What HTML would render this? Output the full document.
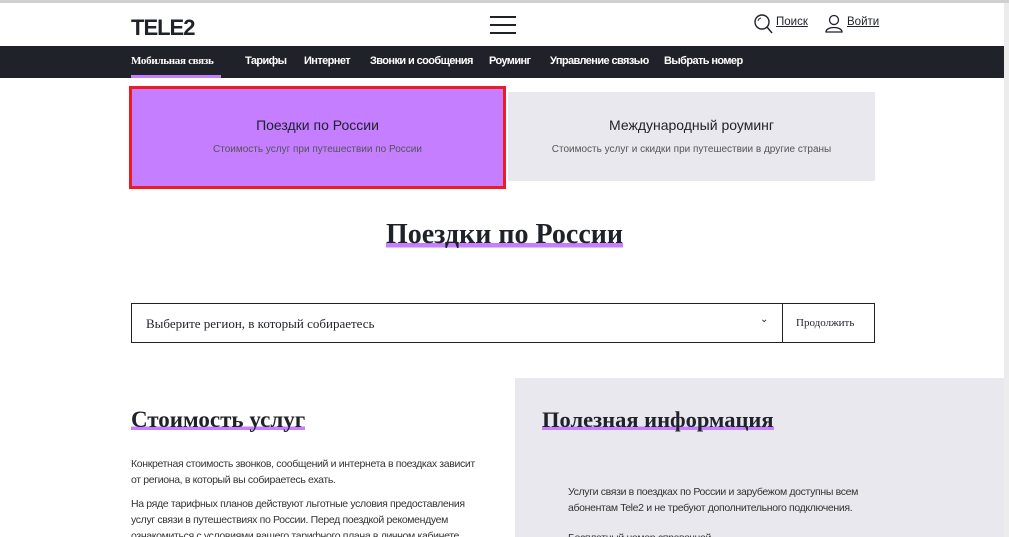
<!DOCTYPE html>
<html><head><meta charset="utf-8"><style>
*{margin:0;padding:0;box-sizing:border-box}
html,body{width:1009px;height:537px;overflow:hidden}
body{background:#fff;font-family:"Liberation Sans",sans-serif;position:relative;color:#1f2229}
.a{position:absolute}
.top{left:0;top:0;width:1009px;height:3px;background:#d0d0d0}
.right{left:1004px;top:3px;width:5px;height:534px;background:#ececec}
.logo{left:131px;top:15px;font:900 22px "Liberation Sans",sans-serif;letter-spacing:-1px;color:#1f2229}
.burger{left:490px;top:16px;width:26px}
.burger i{display:block;height:2px;background:#1f2229;margin-bottom:6px}
.nav{left:0;top:46px;width:1004px;height:32px;background:#1f2229}
.nav span{position:absolute;top:9px;font-size:11px;color:#fff;font-weight:bold;letter-spacing:-0.6px;white-space:nowrap}
.ul{text-decoration:underline;font-size:11.5px}
.h{font-family:"Liberation Serif",serif;font-weight:bold;color:#1f2229;background:linear-gradient(transparent 78%,#c47eff 78%,#c47eff 92%,transparent 92%)}
p{font-size:10.5px;line-height:16px;color:#333;letter-spacing:-0.35px;white-space:nowrap}
</style></head><body>
<div class="a top"></div><div class="a right"></div>
<div class="a logo">TELE2</div>
<div class="a burger"><i></i><i></i><i></i></div>
<svg class="a" style="left:753px;top:13px" width="20" height="22" viewBox="0 0 20 22"><circle cx="9" cy="9" r="7" fill="none" stroke="#1f2229" stroke-width="1.4"/><path d="M14 14 L19 20" stroke="#1f2229" stroke-width="1.4"/><path d="M5 8 A4 4 0 0 1 8 5" fill="none" stroke="#1f2229" stroke-width="1"/></svg>
<div class="a ul" style="left:776px;top:16px">Поиск</div>
<svg class="a" style="left:825px;top:14px" width="18" height="20" viewBox="0 0 18 20"><circle cx="9" cy="6" r="4.5" fill="none" stroke="#1f2229" stroke-width="1.3"/><path d="M1 18 C1 12 17 12 17 18 Z" fill="none" stroke="#1f2229" stroke-width="1.3"/></svg>
<div class="a ul" style="left:847px;top:16px">Войти</div>
<div class="a nav">
<span style="left:131px;font-family:'Liberation Serif',serif;letter-spacing:-0.3px">Мобильная связь</span>
<span style="left:245px">Тарифы</span><span style="left:304px">Интернет</span><span style="left:370px">Звонки и сообщения</span><span style="left:489px">Роуминг</span><span style="left:550px">Управление связью</span><span style="left:664px">Выбрать номер</span>
<div class="a" style="left:131px;top:29px;width:90px;height:3px;background:#c47eff"></div>
</div>
<div class="a" style="left:129px;top:86px;width:377px;height:103px;border:3px solid #ed1c24;background:#c47eff"></div>
<div class="a" style="left:133px;top:117px;width:369px;text-align:center;font-size:14px">Поездки по России</div>
<div class="a" style="left:133px;top:144px;width:369px;text-align:center;font-size:10px;color:#555">Стоимость услуг при путешествии по России</div>
<div class="a" style="left:508px;top:92px;width:367px;height:89px;background:#e9e8ee"></div>
<div class="a" style="left:508px;top:117px;width:367px;text-align:center;font-size:14px">Международный роуминг</div>
<div class="a" style="left:508px;top:144px;width:367px;text-align:center;font-size:10px;color:#555">Стоимость услуг и скидки при путешествии в другие страны</div>
<div class="a" style="left:0;top:219px;width:1009px;text-align:center"><span class="h" style="font-size:28px">Поездки по России</span></div>
<div class="a" style="left:131px;top:303px;width:744px;height:40px;border:1px solid #1f2229"></div>
<div class="a" style="left:782px;top:303px;width:1px;height:40px;background:#1f2229"></div>
<div class="a" style="left:146px;top:316px;font-family:'Liberation Serif',serif;font-size:13px">Выберите регион, в который собираетесь</div>
<div class="a" style="left:760px;top:314px;font-size:10px">&#8964;</div>
<div class="a" style="left:796px;top:317px;font-family:'Liberation Serif',serif;font-size:11px">Продолжить</div>
<div class="a" style="left:515px;top:378px;width:489px;height:159px;background:#e9e8ee"></div>
<div class="a" style="left:131px;top:407px"><span class="h" style="font-size:23px">Стоимость услуг</span></div>
<div class="a" style="left:542px;top:407px"><span class="h" style="font-size:22.5px">Полезная информация</span></div>
<div class="a" style="left:131px;top:456px;width:380px"><p>Конкретная стоимость звонков, сообщений и интернета в поездках зависит<br>от региона, в который вы собираетесь ехать.</p><p style="margin-top:8px">На ряде тарифных планов действуют льготные условия предоставления<br>услуг связи в путешествиях по России. Перед поездкой рекомендуем<br>ознакомиться с условиями вашего тарифного плана в личном кабинете,</p></div>
<div class="a" style="left:568px;top:484px;width:330px"><p>Услуги связи в поездках по России и зарубежом доступны всем<br>абонентам Tele2 и не требуют дополнительного подключения.</p><p style="margin-top:14px">Бесплатный номер справочной</p></div>
</body></html>
